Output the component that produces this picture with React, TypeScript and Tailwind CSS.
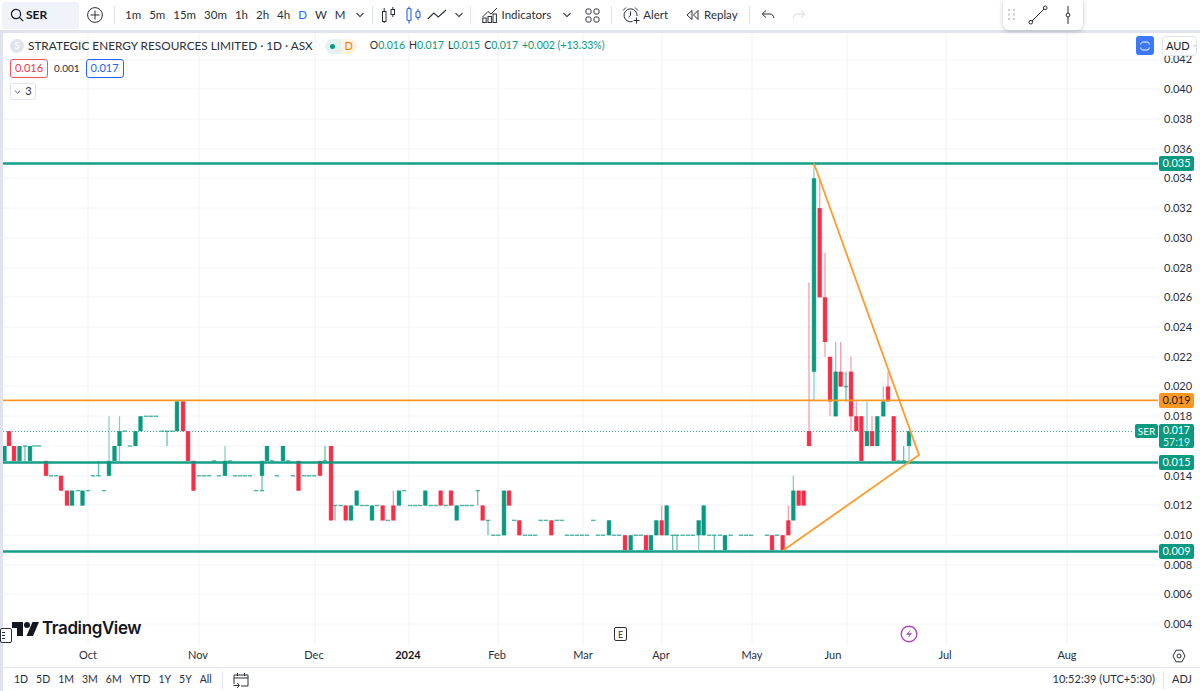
import React from "react";

type C = [number, number, number, number?, number?];
const Y = (p: number) => 163.5 + (35 - p) * 14.87;

// x, open, close, high, low in thousandths of a dollar
const candles: C[] = [
  [4.5,15,16],[9,17,16],[14,16,15],[19.5,15,16],[25,16,16,16,15],[30,15,16],[34.5,16,16],[39,16,16],[46,15,14],[51,14,14],[56,14,14],[61,14,13],[67,13,12],[72,12,13],[78,13,13],[82.5,12,13],[88,13,13],[93,14,14],[98.5,14,14,15,14],[104,13,13],[109,14,15,18,14],[114.5,15,16],[119.5,16,17,18,15],[124.5,17,17],[130,16,16],[135.5,16,17],[140.5,17,18],[146,18,18],[151,18,18],[156,18,18],[162,17,17],[167,17,17,17,16],[172,17,17],[177,17,19],[183,19,17],[188,17,15],[193.5,15,13],[199,14,14],[204,14,14],[209,14,14],[214,15,15],[219,14,14],[225,14,15,16,14],[230,15,15],[235,14,14],[240,14,14],[245,14,14],[250,14,14],[256,13,13],[262,13,13,14,13],[262,14,15],[267,15,16],[272,15,15],[277,14,14],[283,15,16],[288,15,15],[293,14,14],[298.5,15,13],[304,14,14],[309,14,14],[314,14,14],[320,15,14],[325,15,15,16,15],
  [331,16,11],[335,12,12,12,11],[340.7,12,12],[345.7,12,11],[351,11,12],[356.7,12,13],[362,12,12],[366.7,12,12],[372,11,12],[377,12,12],[382.7,12,11],[387.7,11,11],[393.3,12,11,13,11],[399,12,13],[404,13,13],[410,12,12],[415,12,12],[420,12,12],[425.3,12,13],[430.7,12,12],[435.7,12,12],[440.7,13,12],[446,12,12],[451,13,12],[456.7,11,12],[462,12,12],[466.7,12,12],[471.7,12,12],[477.7,13,13,13,12],[482.7,12,11],[488,11,11,11,10],[493.3,10,10],[498.3,10,10],[504,10,13],[509,13,12],[514.3,11,11],[519.3,11,10],[525,10,10],[530,10,10],[535,10,10],[540.7,11,11],[546,11,11],[551.3,11,10],[556.7,11,11],[561.7,11,11],[567,10,10],[572,10,10],[577,10,10],[582,10,10],[587,10,10],[593.3,11,11],[598,10,10],[603,10,10],[609,10,11],[614,10,10],[619,10,10],[625,10,9],[630.7,9,10],[635.7,10,10],[640.7,10,10],[646,10,9],[651,9,10],[656.3,10,11],[661.7,11,10,12,10],[666.7,10,12],
  [672.7,10,10,10,9],[677,10,10,10,9],[682.7,10,10],[688,10,10],[693,10,10],[698.7,10,11,11,9],[703.7,10,12],[709.3,10,10],[714.3,10,10,10,9],[720,10,10],[725,9,10],[730.7,10,10],[741,10,10],[746,10,10],[751,10,10],[767,10,10],[772,10,9],[777,10,10],[782.7,10,9],[788.3,11,10,12,10],[793.3,11,13,14,11],[798.7,13,12],[803.7,13,12],
  [809,17,16,27,16],[814,21,34,35,19],[819.7,32,26,34,26],[825,26,23,29,22],[830,22,19,22,18],[835.7,18,21,23,18],[840.7,21,20,23,20],[846,20,20,21,19],[851,21,18,22,17],[856.3,18,17,19,17],[861.3,18,15],[867,16,17,19,16],[872,17,16,18,16],[877.3,16,18],[883.3,18,19,20,18],[888,20,19,21,19],[893.7,18,15],[898.7,15,15],[903.7,15,15,16,15],[909,16,17,17,15],
];

const GREEN = "#089981";
const RED = "#f62d47";

const priceLabels: [string, number][] = [
  ["0.042", 59],["0.040", 89],["0.038", 119],["0.036", 149],["0.034", 178],["0.032", 208],["0.030", 238],["0.028", 268],["0.026", 297],["0.024", 327],["0.022", 357],["0.020", 386],["0.018", 416],["0.014", 476],["0.012", 505],["0.010", 535],["0.008", 565],["0.006", 594],["0.004", 624],
];
const gridY = [60,89,119,149,178,208,238,268,297,327,357,386,416,446,476,505,535,565,594,624];
const gridX = [88,199,315,409,498,583,662,752,847,946,1067];
const monthLabels: [string, number][] = [["Oct",88],["Nov",198],["Dec",314],["2024",408],["Feb",497],["Mar",583],["Apr",661],["May",752],["Jun",833],["Jul",945],["Aug",1067]];

function Chart() {
  return (
    <svg viewBox="3 33 1155 612" width="1155" height="612" className="block">
      {gridY.map((y) => <line key={y} x1="3" x2="1158" y1={y} y2={y} stroke="#f3f4f6" strokeWidth="1" />)}
      {gridX.map((x) => <line key={x} x1={x} x2={x} y1="33" y2="645" stroke="#f1f2f5" strokeWidth="1" />)}
      <line x1="3" x2="1134" y1="431.5" y2="431.5" stroke={GREEN} strokeWidth="1" strokeDasharray="1 2" opacity="0.75" />
      {candles.map(([x, o, c, h, l], i) => {
        const col = c > o ? GREEN : c < o ? RED : GREEN;
        const hi = h ?? Math.max(o, c);
        const lo = l ?? Math.min(o, c);
        const top = Y(Math.max(o, c));
        const bot = Y(Math.min(o, c));
        return (
          <g key={i}>
            {hi !== lo && <line x1={x} x2={x} y1={Y(hi)} y2={Y(lo)} stroke={col} strokeWidth="1.2" opacity={o === c ? 0.65 : 0.5} />}
            {o === c ? (
              <rect x={x - 2.2} y={top - 0.7} width="4.4" height="1.4" fill={GREEN} opacity="0.7" />
            ) : (
              <>
                <rect x={x - 2.5} y={top} width="5" height={bot - top} fill={col} opacity="0.35" />
                <rect x={x - 1.9} y={top} width="3.8" height={bot - top} fill={col} />
              </>
            )}
          </g>
        );
      })}
      <line x1="3" x2="1158" y1="163.5" y2="163.5" stroke={GREEN} strokeWidth="2.6" opacity="0.95" />
      <line x1="3" x2="1158" y1="462.5" y2="462.5" stroke={GREEN} strokeWidth="2.6" opacity="0.95" />
      <line x1="3" x2="1158" y1="551.5" y2="551.5" stroke={GREEN} strokeWidth="2.6" opacity="0.95" />
      <line x1="3" x2="1158" y1="400.3" y2="400.3" stroke="#ff9820" strokeWidth="1.7" />
      <polyline points="783,550.5 919,455 814,163.5" fill="none" stroke="#ff9c2a" strokeWidth="1.8" strokeLinejoin="miter" />
    </svg>
  );
}

const Sep = () => <div className="w-px h-[18px] bg-[#e0e3eb] shrink-0" />;
const Chevron = ({ className = "" }: { className?: string }) => (
  <svg width="10" height="6" viewBox="0 0 10 6" className={className}><path d="M1.5 1.2 5 4.6l3.5-3.4" fill="none" stroke="#2a2e39" strokeWidth="1.1" /></svg>
);

function TopBar() {
  return (
    <div className="h-[30px] flex items-center text-[11.5px] text-[#2a2e39] shrink-0">
      <div className="ml-[2px] w-[77px] h-[27px] bg-[#f0f3fa] rounded-[3px] flex items-center pl-[8px] gap-[2px]">
        <svg width="14" height="14" viewBox="0 0 14 14"><circle cx="6" cy="6" r="4.6" fill="none" stroke="#131722" strokeWidth="1.2" /><path d="m9.4 9.4 3.8 3.8" stroke="#131722" strokeWidth="1.2" /></svg>
        <span className="font-bold text-[#131722] text-[12px]">SER</span>
      </div>
      <svg width="16" height="16" viewBox="0 0 16 16" className="ml-[8px]"><circle cx="8" cy="8" r="7.4" fill="none" stroke="#2a2e39" strokeWidth="1" /><path d="M8 3.5v9M3.5 8h9" stroke="#2a2e39" strokeWidth="1" /></svg>
      <div className="ml-[11px]"><Sep /></div>
      <div className="ml-[10px] flex items-center gap-[8px]">
        {["1m","5m","15m","30m","1h","2h","4h"].map((t) => <span key={t}>{t}</span>)}
        <span className="text-[#2962ff]">D</span>
        <span>W</span>
        <span>M</span>
        <Chevron className="ml-[1px]" />
      </div>
      <div className="ml-[7px]"><Sep /></div>
      <svg width="16" height="18" viewBox="0 0 16 18" className="ml-[8px]"><g fill="none" stroke="#2a2e39"><rect x="1.5" y="5.5" width="3.5" height="10" /><path d="M3.2 2v3.5M3.2 15.5V17" /><rect x="10" y="3.5" width="3.5" height="5" /><path d="M11.8 1v2.5M11.8 8.5V11" /></g></svg>
      <svg width="16" height="18" viewBox="0 0 16 18" className="ml-[9px]"><g fill="none" stroke="#2962ff" strokeWidth="1.1"><rect x="1" y="2.5" width="4" height="12" rx="1" /><path d="M3 .5v2M3 14.5v3" /><rect x="10" y="5.5" width="4" height="6" rx="1" /><path d="M12 3v2.5M12 11.5V14" /></g></svg>
      <svg width="20" height="14" viewBox="0 0 20 14" className="ml-[5px]"><path d="m.8 11 6-6 4.5 4L19 2" fill="none" stroke="#2a2e39" strokeWidth="1.1" /></svg>
      <Chevron className="ml-[7px]" />
      <div className="ml-[6px]"><Sep /></div>
      <svg width="16" height="16" viewBox="0 0 16 16" className="ml-[11px]"><g fill="none" stroke="#2a2e39" strokeWidth="1"><path d="M.5 10 6 4.5 9 7l6-6" /><rect x=".8" y="11" width="3.4" height="4.5" /><rect x="6" y="9.5" width="3.4" height="6" /><rect x="11" y="7" width="3.4" height="8.5" /></g></svg>
      <span className="ml-[4px]">Indicators</span>
      <Chevron className="ml-[11px]" />
      <svg width="15" height="15" viewBox="0 0 15 15" className="ml-[13px]"><g fill="none" stroke="#2a2e39"><rect x="1" y="1" width="5" height="5" rx="1.5" /><rect x="9" y="1" width="5" height="5" rx="1.5" /><rect x="1" y="9" width="5" height="5" rx="1.5" /><rect x="9" y="9" width="5" height="5" rx="1.5" /></g></svg>
      <div className="ml-[11px]"><Sep /></div>
      <svg width="18" height="18" viewBox="0 0 18 18" className="ml-[10px]"><g fill="none" stroke="#2a2e39"><path d="M10.5 15.5A6.5 6.5 0 1 1 15 10" /><path d="M8.5 5.5v4l-2 1.5M1 4.5 4 1.5M13 1.5l3 3M14.5 11.5v6M11.5 14.5h6" /></g></svg>
      <span className="ml-[3px]">Alert</span>
      <svg width="14" height="12" viewBox="0 0 14 12" className="ml-[18px]"><g fill="none" stroke="#2a2e39"><path d="M6 1.5 1 6l5 4.5zM12 1.5 7.5 6l4.5 4.5z" /></g></svg>
      <span className="ml-[4px]">Replay</span>
      <div className="ml-[11px]"><Sep /></div>
      <svg width="14" height="12" viewBox="0 0 14 12" className="ml-[11px]"><path d="M5 1.5 1.2 5 5 8.5M1.5 5H9c2.2 0 3.6 1.5 3.8 4" fill="none" stroke="#2a2e39" /></svg>
      <svg width="14" height="12" viewBox="0 0 14 12" className="ml-[17px]"><path d="M9 1.5 12.8 5 9 8.5M12.5 5H5C2.8 5 1.4 6.5 1.2 9" fill="none" stroke="#d1d4dc" /></svg>
    </div>
  );
}

function PriceTag({ y, text, bg = "bg-[#089981]", color = "text-white" }: { y: number; text: string; bg?: string; color?: string }) {
  return (
    <div className={`absolute left-[1px] w-[35px] h-[15px] rounded-[2px] flex items-center justify-center text-[11px] ${bg} ${color}`} style={{ top: y - 33 - 7.5 }}>{text}</div>
  );
}

function PriceAxis() {
  return (
    <div className="relative w-[42px] shrink-0 text-[11px] text-[#2a2e39]">
      {priceLabels.map(([t, y]) => (
        <div key={t} className="absolute left-[6px] leading-[14px]" style={{ top: y - 33 - 7 }}>{t}</div>
      ))}
      <div className="absolute left-[4px] top-[3px] w-[35px] h-[20px] bg-white border border-[#e0e3eb] rounded-[4px] flex items-center pl-[3px] gap-[3px] text-[11px] text-[#131722]">
        AUD <Chevron className="w-[7px]" />
      </div>
      <PriceTag y={163} text="0.035" />
      <PriceTag y={400} text="0.019" bg="bg-[#ff9820]" color="text-[#131722]" />
      <PriceTag y={462} text="0.015" />
      <PriceTag y={551} text="0.009" />
      <div className="absolute left-[1px] top-[391px] w-[35px] h-[24px] rounded-[2px] bg-[#089981] text-white flex flex-col items-center justify-center text-[10.5px] leading-[12px]">
        <span>0.017</span>
        <span className="text-[#d5efe9]">57:19</span>
      </div>
      <div className="absolute left-[-23px] top-[391px] w-[23px] h-[14px] rounded-[2px] bg-[#089981] text-white flex items-center justify-center text-[10px]">SER</div>
    </div>
  );
}

function Legend() {
  return (
    <>
      <div className="absolute left-[7px] top-[5px] flex items-center h-[16px]">
        <div className="w-[14px] h-[14px] rounded-full bg-[#e0e3eb] text-white text-[9px] font-bold flex items-center justify-center">S</div>
        <span className="ml-[4px] text-[11.8px] text-[#2a2e39] whitespace-nowrap">STRATEGIC ENERGY RESOURCES LIMITED · 1D · ASX</span>
        <div className="ml-[12px] flex h-[15px] w-[32px] rounded-full overflow-hidden">
          <div className="w-[16px] bg-[#e2f3f0] flex items-center justify-center"><div className="w-[5px] h-[5px] rounded-full bg-[#089981]" /></div>
          <div className="w-[16px] bg-[#fff3e0] flex items-center justify-center text-[11px] text-[#f57c00]">D</div>
        </div>
        <div className="ml-[13px] flex items-center text-[10.5px] whitespace-nowrap text-[#089981] gap-[4px]">
          {[["O","0.016"],["H","0.017"],["L","0.015"],["C","0.017"]].map(([a,b]) => (
            <span key={a}><span className="text-[#2a2e39]">{a}</span>{b}</span>
          ))}
          <span>+0.002 (+13.33%)</span>
        </div>
      </div>
      <div className="absolute left-[7px] top-[26px] flex items-center gap-[6px] text-[11px]">
        <div className="w-[38px] h-[19px] rounded-[3px] border border-[#f7525f] text-[#f23645] flex items-center justify-center">0.016</div>
        <span className="text-[10px] text-[#2a2e39]">0.001</span>
        <div className="w-[38px] h-[19px] rounded-[3px] border border-[#2962ff] text-[#2962ff] flex items-center justify-center">0.017</div>
      </div>
      <div className="absolute left-[7px] top-[50px] w-[26px] h-[17px] rounded-[3px] border border-[#e0e3eb] bg-white flex items-center justify-center gap-[4px] text-[11px] text-[#2a2e39]">
        <Chevron className="w-[7px]" />3
      </div>
      <div className="absolute left-[1133px] top-[3px] w-[18px] h-[19px] rounded-[3px] bg-[#3b78fb] flex items-center justify-center">
        <svg width="10" height="10" viewBox="0 0 10 10"><path d="M.8 3.5C.8 1.8 1.6 1 3 1h4c1.4 0 2.2.8 2.2 2.5M.8 6.5C.8 8.2 1.6 9 3 9h4c1.4 0 2.2-.8 2.2-2.5" fill="none" stroke="#fff" strokeWidth="1" /></svg>
      </div>
      <div className="absolute left-[-3px] top-[595px] w-[12px] h-[15px] border border-[#2a2e39] rounded-[2px] bg-white flex flex-col justify-center gap-[2px] pl-[1px]">
        <div className="w-[3px] h-px bg-[#2a2e39]" />
        <div className="w-[3px] h-px bg-[#2a2e39]" />
        <div className="w-[3px] h-px bg-[#2a2e39]" />
      </div>
      <div className="absolute left-[9px] top-[584px] flex items-center h-[24px]">
        <svg width="27" height="14" viewBox="0 0 27 14"><path d="M0 0h11v14H5V6H0z" fill="#131722" /><circle cx="15" cy="3" r="3" fill="#131722" /><path d="M20.5 0H27l-6 14h-6.5z" fill="#131722" /></svg>
        <span className="ml-[3px] text-[17px] font-semibold text-[#131722] tracking-[-0.4px] font-['Inter',sans-serif]">TradingView</span>
      </div>
      <div className="absolute left-[611px] top-[594px] w-[13px] h-[14px] border border-[#2a2e39] rounded-[2px] bg-white flex items-center justify-center text-[9px] leading-none text-[#2a2e39]">E</div>
      <svg width="18" height="18" viewBox="0 0 18 18" className="absolute left-[897px] top-[592px]"><circle cx="9" cy="9" r="7.8" fill="#fff" stroke="#ab47bc" strokeWidth="1.4" /><path d="M10.8 4.5 6 9.8h3.6L7.4 13.5l4.8-5.2H8.8z" fill="#ab47bc" /></svg>
    </>
  );
}

export default function App() {
  return (
    <div className="relative w-[1200px] h-[691px] bg-white flex flex-col overflow-hidden font-['Lato','Noto_Sans',sans-serif]">
      <TopBar />
      <div className="absolute left-[1003px] top-0 w-[80px] h-[30px] bg-white rounded-b-[6px] shadow-[0_1px_5px_rgba(0,0,0,0.22)] flex items-center z-10">
        <svg width="8" height="12" viewBox="0 0 8 12" className="ml-[5px]"><g fill="#c9ccd6">{[0,1,2].map((r) => [0,1].map((c) => <rect key={`${r}${c}`} x={c * 5} y={r * 4.5} width="2" height="2" />))}</g></svg>
        <svg width="20" height="20" viewBox="0 0 20 20" className="ml-[12px]"><g fill="none" stroke="#2a2e39"><path d="M3.5 16.5 16.5 3.5" /><circle cx="2.8" cy="17.2" r="1.8" fill="#fff" /><circle cx="17.2" cy="2.8" r="1.8" fill="#fff" /></g></svg>
        <svg width="6" height="20" viewBox="0 0 6 20" className="ml-[17px]"><g fill="none" stroke="#2a2e39"><path d="M3 1v18" /><circle cx="3" cy="10" r="1.9" fill="#fff" /></g></svg>
      </div>
      <div className="flex-1 flex min-h-0">
        <div className="w-[3px] bg-[#e0e3eb] shrink-0" />
        <div className="flex-1 flex flex-col min-w-0">
          <div className="h-[3px] bg-[#e0e3eb] ml-[-3px]" />
          <div className="flex h-[612px]">
            <div className="relative w-[1155px] shrink-0">
              <Chart />
              <Legend />
            </div>
            <PriceAxis />
          </div>
          <div className="relative h-[22px] text-[11px] text-[#2a2e39]">
            {monthLabels.map(([t, x]) => (
              <span key={t} className={`absolute top-[3px] -translate-x-1/2 leading-[14px] ${t === "2024" ? "font-bold text-[#131722]" : ""}`} style={{ left: x - 3 }}>{t}</span>
            ))}
            <svg width="14" height="14" viewBox="0 0 14 14" className="absolute left-[1169px] top-[4px]"><g fill="none" stroke="#2a2e39" strokeWidth="1"><path d="M4 1.2h6L13 7l-3 5.8H4L1 7z" /><circle cx="7" cy="7" r="2" /></g></svg>
          </div>
          <div className="h-[24px] border-t border-[#e0e3eb] flex items-center text-[10.5px] text-[#2a2e39]">
            <div className="ml-[11px] flex gap-[8px]">
              {["1D","5D","1M","3M","6M","YTD","1Y","5Y","All"].map((t) => <span key={t}>{t}</span>)}
            </div>
            <div className="ml-[10px]"><Sep /></div>
            <svg width="16" height="16" viewBox="0 0 16 16" className="ml-[10px]"><g fill="none" stroke="#2a2e39"><path d="M1 12V3h14v11H8M1 6h14M4.5 1v3M11.5 1v3M.5 13.5H6M4 11l2.5 2.5L4 16" /></g></svg>
            <div className="ml-auto flex items-center">
              <span className="text-[11px]">10:52:39 (UTC+5:30)</span>
              <div className="ml-[8px]"><Sep /></div>
              <span className="ml-[8px] mr-[8px] text-[11px]">ADJ</span>
            </div>
          </div>
        </div>
      </div>
    </div>
  );
}
